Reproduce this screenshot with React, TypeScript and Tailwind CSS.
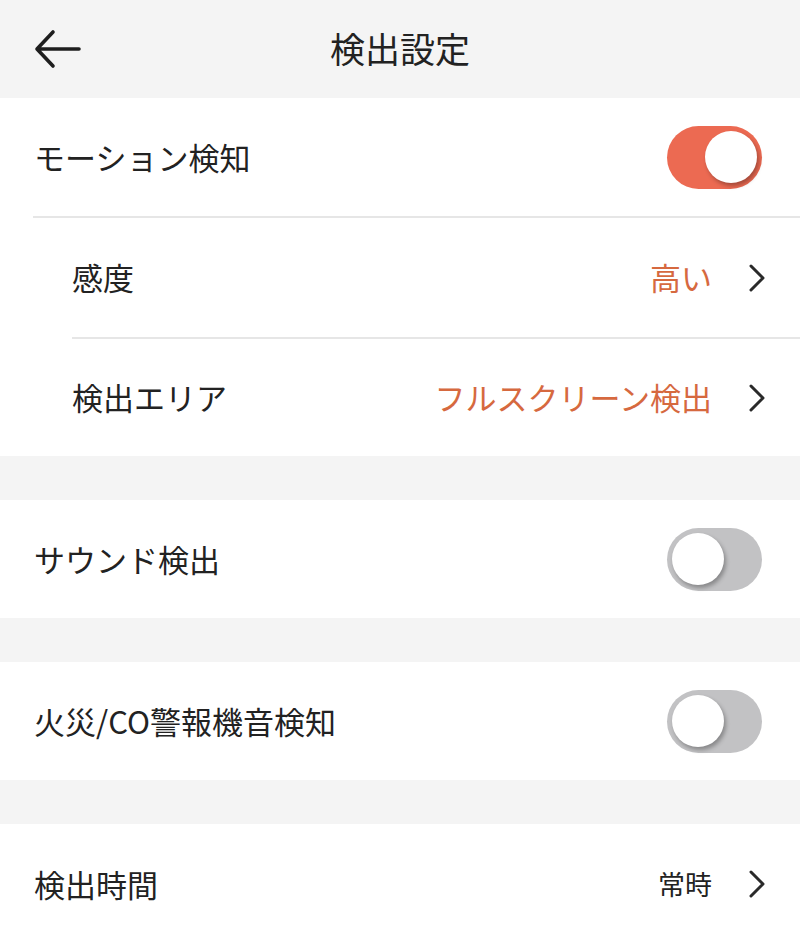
import React from "react";

const font = { fontFamily: '"Noto Sans CJK JP", "Noto Sans", sans-serif' };

function Chevron() {
  return (
    <svg width="22" height="30" viewBox="0 0 22 30" className="ml-[34px] shrink-0">
      <path d="M5 3 L17 15 L5 27" fill="none" stroke="#2a2a2a" strokeWidth="3" strokeLinecap="round" strokeLinejoin="round" />
    </svg>
  );
}

function Toggle({ on }: { on: boolean }) {
  return (
    <div
      className={
        "relative w-[95px] h-[63px] rounded-full flex items-center px-[5px] " +
        (on ? "bg-[#ec6a52] justify-end" : "bg-[#c2c2c4] justify-start")
      }
    >
      <div className="w-[52px] h-[52px] rounded-full bg-white shadow-[2px_3px_4px_rgba(0,0,0,0.3)]" />
    </div>
  );
}

export default function App() {
  return (
    <div className="w-[800px] h-[939px] bg-[#f4f4f4] overflow-hidden text-[#222222]" style={font}>
      <div className="h-[98px] flex items-center relative">
        <svg width="48" height="44" viewBox="0 0 48 44" className="ml-[34px]">
          <path d="M45 22 H4 M19 5 L3 22 L19 39" fill="none" stroke="#1e1e1e" strokeWidth="3.6" strokeLinecap="round" strokeLinejoin="round" />
        </svg>
        <div className="absolute left-0 right-0 top-[26px] text-center text-[35px] leading-[44px] pointer-events-none">検出設定</div>
      </div>

      <div className="bg-white">
        <div className="h-[118px] flex items-center justify-between pl-[34px] pr-[38px]">
          <span className="text-[31px]">モーション検知</span>
          <Toggle on />
        </div>
        <div className="ml-[33px] h-[2px] bg-[#e6e6e6]" />
        <div className="h-[119px] flex items-center justify-between pl-[72px] pr-[32px]">
          <span className="text-[31px]">感度</span>
          <div className="flex items-center">
            <span className="text-[31px] text-[#d6693f]">高い</span>
            <Chevron />
          </div>
        </div>
        <div className="ml-[72px] h-[2px] bg-[#e6e6e6]" />
        <div className="h-[117px] flex items-center justify-between pl-[72px] pr-[32px]">
          <span className="text-[31px]">検出エリア</span>
          <div className="flex items-center">
            <span className="text-[31px] text-[#d6693f]">フルスクリーン検出</span>
            <Chevron />
          </div>
        </div>
      </div>

      <div className="h-[44px]" />

      <div className="bg-white h-[118px] flex items-center justify-between pl-[34px] pr-[38px]">
        <span className="text-[31px]">サウンド検出</span>
        <Toggle on={false} />
      </div>

      <div className="h-[44px]" />

      <div className="bg-white h-[118px] flex items-center justify-between pl-[34px] pr-[38px]">
        <span className="text-[31px]">火災/CO警報機音検知</span>
        <Toggle on={false} />
      </div>

      <div className="h-[44px]" />

      <div className="bg-white h-[120px] flex items-center justify-between pl-[34px] pr-[32px]">
        <span className="text-[31px]">検出時間</span>
        <div className="flex items-center">
          <span className="text-[27px]">常時</span>
          <Chevron />
        </div>
      </div>
    </div>
  );
}
